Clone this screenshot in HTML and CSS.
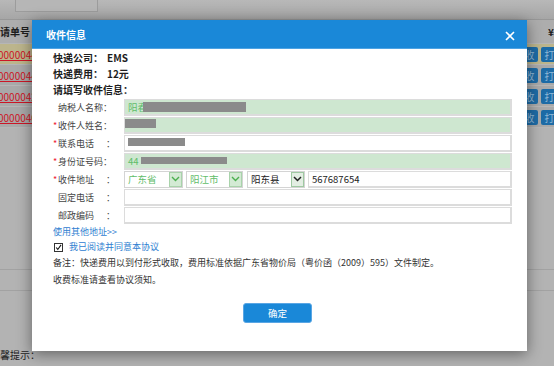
FILE: index.html
```html
<!DOCTYPE html>
<html lang="zh-CN">
<head>
    <meta charset="UTF-8">
    <meta name="viewport" content="width=device-width, initial-scale=1.0">
    <title>收件信息</title>
    <link rel="stylesheet" href="styles.css">
</head>
<body>
    <!-- page behind the mask -->
    <div class="page">
        <div class="topbar"><div class="topbox"></div></div>
        <div class="row th">
            <span class="th-text">请单号</span>
            <span class="th-text">¥</span>
        </div>
        <div class="row hl">
            <a class="order">0000044</a>
            <span class="ops"><span class="op">收</span><span class="op">打</span></span>
        </div>
        <div class="row">
            <a class="order">0000044</a>
            <span class="ops"><span class="op">收</span><span class="op">打</span></span>
        </div>
        <div class="row">
            <a class="order">0000042</a>
            <span class="ops"><span class="op">收</span><span class="op">打</span></span>
        </div>
        <div class="row">
            <a class="order">0000040</a>
            <span class="ops"><span class="op">收</span><span class="op">打</span></span>
        </div>
        <div class="sep first"></div>
        <div class="sep"></div>
        <div class="tip">馨提示：</div>
    </div>

    <div class="dialog">
        <div class="dialog-head">
            <span class="dialog-title">收件信息</span>
            <svg class="close" width="10" height="10" viewBox="0 0 10 10">
                <path d="M1 1 L9 9 M9 1 L1 9" stroke="#fff" stroke-width="1.6" fill="none"/>
            </svg>
        </div>
        <div class="dialog-body">
            <div class="info">快递公司：<span class="val">EMS</span></div>
            <div class="info">快递费用：<span class="val">12元</span></div>
            <div class="info">请填写收件信息：</div>

            <form class="form-list">
                <div class="form-row">
                    <label class="lbl"><span class="req"></span><span class="name">纳税人名称</span>：</label>
                    <div class="box green"><span class="gtext">阳春</span><span class="mask m1"></span></div>
                </div>
                <div class="form-row">
                    <label class="lbl"><span class="req">*</span><span class="name">收件人姓名</span>：</label>
                    <div class="box green nopad"><span class="mask m2"></span></div>
                </div>
                <div class="form-row">
                    <label class="lbl"><span class="req">*</span><span class="name pad">联系电话</span>：</label>
                    <div class="box"><span class="mask m3"></span></div>
                </div>
                <div class="form-row">
                    <label class="lbl"><span class="req">*</span><span class="name">身份证号码</span>：</label>
                    <div class="box green"><span class="gtext">44</span><span class="mask m4"></span></div>
                </div>
                <div class="form-row">
                    <label class="lbl"><span class="req">*</span><span class="name pad">收件地址</span>：</label>
                    <div class="addr">
                        <div class="sel s1">
                            <span class="gtext">广东省</span>
                            <span class="arrow">
                                <svg width="9" height="6" viewBox="0 0 9 6"><path d="M1 1 L4.5 4.5 L8 1" stroke="#4caf50" stroke-width="1.4" fill="none"/></svg>
                            </span>
                        </div>
                        <div class="sel s2">
                            <span class="gtext">阳江市</span>
                            <span class="arrow">
                                <svg width="9" height="6" viewBox="0 0 9 6"><path d="M1 1 L4.5 4.5 L8 1" stroke="#4caf50" stroke-width="1.4" fill="none"/></svg>
                            </span>
                        </div>
                        <div class="sel s3">
                            <span>阳东县</span>
                            <span class="arrow dark">
                                <svg width="9" height="6" viewBox="0 0 9 6"><path d="M1 1 L4.5 4.5 L8 1" stroke="#222" stroke-width="1.5" fill="none"/></svg>
                            </span>
                        </div>
                        <div class="box street">567687654</div>
                    </div>
                </div>
                <div class="form-row">
                    <label class="lbl"><span class="req"></span><span class="name pad">固定电话</span>：</label>
                    <div class="box"></div>
                </div>
                <div class="form-row">
                    <label class="lbl"><span class="req"></span><span class="name pad">邮政编码</span>：</label>
                    <div class="box"></div>
                </div>
            </form>

            <a class="link">使用其他地址&gt;&gt;</a>
            <div class="agree">
                <span class="check">
                    <svg width="9" height="9" viewBox="0 0 9 9"><path d="M1.5 4.5 L3.6 7 L7.8 1.2" stroke="#111" stroke-width="1.4" fill="none"/></svg>
                </span>
                <a class="link">我已阅读并同意本协议</a>
            </div>
            <p class="note">备注：快递费用以到付形式收取，费用标准依据广东省物价局（粤价函（2009）595）文件制定。</p>
            <p class="note">收费标准请查看协议须知。</p>

            <div class="actions">
                <button type="button" class="ok">确定</button>
            </div>
        </div>
    </div>
</body>
</html>
```

FILE: styles.css
```css
body {
    margin: 0;
    width: 554px;
    height: 366px;
    overflow: hidden;
    font-family: "Noto Sans CJK SC", "Noto Sans", sans-serif;
    background: #b3b3b3;
}

/* page behind the mask, painted already dimmed */
.page {
    width: 554px;
}

.topbar {
    height: 19px;
    border-bottom: 1px solid #979797;
    background: linear-gradient(#b8b8b8, #a6a6a6);
}

.topbox {
    margin-left: 15px;
    width: 81px;
    height: 11px;
    border: 1px solid #9c9c9c;
    border-top: none;
    background: #b6b6b6;
}

.row {
    height: 21px;
    display: flex;
    align-items: center;
    justify-content: space-between;
    background: #a9a9a9;
    border-bottom: 1px solid #b6b6b6;
    box-sizing: border-box;
}

.row.th {
    height: 24px;
    background: #adadad;
}

.th-text {
    font-size: 10px;
    font-weight: bold;
    color: #1e1e1e;
}

.row.hl {
    background: #bcb58c;
}

.order {
    font-size: 10px;
    color: #cc1626;
    text-decoration: underline;
    margin-left: -2px;
}

.ops {
    display: flex;
    gap: 3px;
    margin-right: -4px;
}

.op {
    width: 17px;
    height: 15px;
    border-radius: 2px;
    background: #1d6ba6;
    color: #8fb8d6;
    font-size: 10px;
    line-height: 15px;
    text-align: center;
}

.sep {
    height: 20px;
    border-top: 1px solid #a2a2a2;
}

.sep.first {
    margin-top: 141px;
}

.tip {
    margin-top: 37px;
    font-size: 10px;
    line-height: 14px;
    color: #1e1e1e;
    white-space: nowrap;
}

/* dialog */
.dialog {
    position: absolute;
    left: 32px;
    top: 20px;
    width: 495px;
    height: 331px;
    background: #fff;
    box-shadow: 0 3px 14px rgba(0, 0, 0, 0.45);
}

.dialog-head {
    height: 28px;
    border-bottom: 1px solid #4ea3e3;
    background: #1a88d8;
    display: flex;
    align-items: center;
    justify-content: space-between;
    padding: 0 12px 0 14px;
}

.dialog-title {
    color: #fff;
    font-size: 10px;
    font-weight: bold;
}

.close {
    margin-top: 3px;
}

.dialog-body {
    padding: 1px 15px 0 21px;
}

.info {
    font-size: 10px;
    font-weight: bold;
    line-height: 16px;
    color: #1e1e1e;
}

.info .val {
    margin-left: 4px;
}

.form-list {
    margin: 0;
}

.form-row {
    display: flex;
    align-items: center;
    height: 18px;
}

.lbl {
    width: 71px;
    display: flex;
    align-items: center;
    font-size: 9px;
    color: #444;
    white-space: nowrap;
}

.req {
    width: 5px;
    color: #e23;
    font-size: 9px;
}

.name {
    display: inline-block;
    min-width: 45px;
}

.name.pad {
    min-width: 48px;
}

.box {
    flex: 1;
    height: 17px;
    box-sizing: border-box;
    border: 1px solid #dcdcdc;
    border-right-width: 2px;
    border-bottom-width: 2px;
    background: #fff;
    padding-left: 3px;
    display: flex;
    align-items: center;
    font-size: 9.5px;
    color: #222;
}

.box.green {
    background: #cee7d0;
}

.box.nopad {
    padding-left: 0;
}

.gtext {
    color: #5fbd6a;
}

.mask {
    display: inline-block;
    background: #8b8b8b;
}

.m1 {
    width: 103px;
    height: 10px;
    margin-left: -4px;
}

.m2 {
    width: 31px;
    height: 9px;
    margin-top: -3px;
}

.m3 {
    width: 57px;
    height: 8px;
    margin-top: -2px;
}

.m4 {
    width: 86px;
    height: 7px;
    margin-left: 2px;
}

.addr {
    flex: 1;
    display: flex;
    gap: 3px;
    height: 17px;
}

.sel {
    height: 17px;
    box-sizing: border-box;
    border: 1px solid #d4d4d4;
    display: flex;
    align-items: center;
    justify-content: space-between;
    padding-left: 3px;
    font-size: 9.5px;
    color: #222;
}

.s1 {
    width: 59px;
}

.s2 {
    width: 57px;
}

.s3 {
    width: 58px;
    margin-left: 1px;
}

.arrow {
    width: 13px;
    height: 15px;
    box-sizing: border-box;
    border: 1px solid #a9d3ab;
    background: #d3ead4;
    display: flex;
    align-items: center;
    justify-content: center;
}

.arrow.dark {
    border-color: #9fc9a2;
    background: #e3eee3;
}

.street {
    padding-left: 3px;
}

.link {
    display: block;
    font-size: 9px;
    line-height: 16px;
    color: #2f80d1;
}

.agree {
    display: flex;
    align-items: center;
    height: 14px;
}

.agree .link {
    display: inline;
    margin-left: 6px;
}

.check {
    width: 9px;
    height: 9px;
    box-sizing: border-box;
    border: 1px solid #333;
    margin-left: 1px;
    display: flex;
    align-items: center;
    justify-content: center;
}

.note {
    margin: 0;
    font-size: 9px;
    line-height: 17px;
    color: #333;
    white-space: nowrap;
}

.actions {
    margin-top: 15px;
    padding-right: 10px;
    display: flex;
    justify-content: center;
}

.ok {
    width: 69px;
    height: 20px;
    border: 1px solid #5aa6e4;
    border-radius: 3px;
    background: #1a88d8;
    color: #fff;
    font-family: inherit;
    font-size: 9.5px;
    cursor: pointer;
}
```
